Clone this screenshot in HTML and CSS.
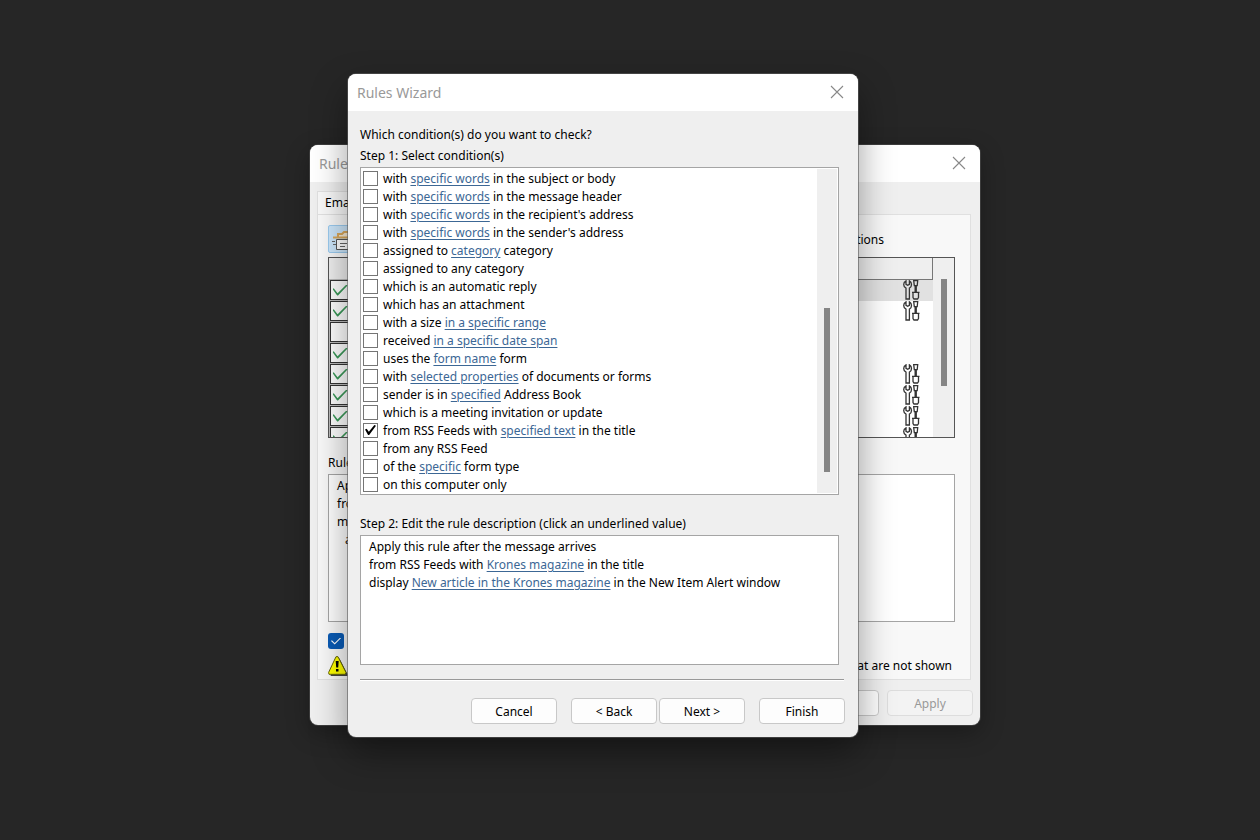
FILE: index.html
```html
<!DOCTYPE html>
<html lang="en">
<head>
<meta charset="utf-8">
<title>Rules Wizard</title>
<link rel="stylesheet" href="styles.css">
</head>
<body>
<svg class="defs" aria-hidden="true">
  <symbol id="close" viewBox="0 0 14 14"><path d="M1 1l12 12M13 1L1 13" fill="none" stroke="currentColor" stroke-width="1.100"/></symbol>
  <symbol id="tools" viewBox="0 0 17 20">
    <g fill="none" stroke="#333" stroke-width="1.300">
      <path d="M3 .8C1.300 1.500.7 3 .7 4.500c0 2 1 3 2.300 3.600V19h3.400V8.100C7.800 7.500 8.500 6 8.500 4.500 8.500 3 7.800 1.500 6.400.8v3.500L4.700 5.300 3 4.300z"/>
      <path d="M10.700.7h4l-.5 5h-2.900zM10 12.300h5.500v5.200l-1 1.500h-3.500l-1-1.500zM9 12.300h7.500"/>
      <path d="M12.700 6v6" stroke-width="2.400"/>
    </g>
  </symbol>
</svg>
<main class="desktop">

  <section class="window window-back" aria-label="Rules and Alerts">
    <header class="titlebar">
      <h2 class="title">Rules</h2>
      <button class="close" aria-label="Close"><svg><use href="#close"/></svg></button>
    </header>
    <div class="tabs"><button class="tab">Email</button></div>
    <div class="panel">
      <div class="toolbar">
        <button class="tool" aria-label="New rule">
          <svg viewBox="0 0 28 28">
            <path d="M4 11.500h20M9 11V8h4l2-2h9v5" fill="#f8ecd5" stroke="#d9a85b" stroke-width="2"/>
            <path d="M7.500 13.500h15v10h-15z" fill="#fff" stroke="#555"/>
            <path d="M3 15.500h3M4 18.500h3M11 17.500h7M11 20.500h5" stroke="#666"/>
          </svg>
        </button>
        <button class="tool-text">Options</button>
      </div>
      <div class="rules">
        <div class="rules-main">
          <div class="rules-head"></div>
          <ul class="rules-list">
            <li class="rule selected"><input type="checkbox" class="rule-check" aria-label="Rule 1" checked><svg><use href="#tools"/></svg></li>
            <li class="rule"><input type="checkbox" class="rule-check" aria-label="Rule 2" checked><svg><use href="#tools"/></svg></li>
            <li class="rule"><input type="checkbox" class="rule-check" aria-label="Rule 3"></li>
            <li class="rule"><input type="checkbox" class="rule-check" aria-label="Rule 4" checked></li>
            <li class="rule"><input type="checkbox" class="rule-check" aria-label="Rule 5" checked><svg><use href="#tools"/></svg></li>
            <li class="rule"><input type="checkbox" class="rule-check" aria-label="Rule 6" checked><svg><use href="#tools"/></svg></li>
            <li class="rule"><input type="checkbox" class="rule-check" aria-label="Rule 7" checked><svg><use href="#tools"/></svg></li>
            <li class="rule"><input type="checkbox" class="rule-check" aria-label="Rule 8" checked><svg><use href="#tools"/></svg></li>
          </ul>
        </div>
        <div class="scrollbar scrollbar-rules"><div class="thumb"></div></div>
      </div>
      <p class="rule-label">Rule</p>
      <div class="summary summary-back">
        <p>Ap</p>
        <p>fro</p>
        <p>m</p>
        <p class="indent">a</p>
      </div>
      <div class="enable"><input type="checkbox" class="blue-check" aria-label="Enable rules" checked></div>
      <div class="warning">
        <svg viewBox="0 0 20 20">
          <path d="M8.500 2.500h3L19.500 18v2H2.500z" fill="#444"/>
          <path d="M8 .7h2L18 16.500l-.7 1.800H1L.6 16.500z" fill="#ff0" stroke="#66660a"/>
          <path d="M7.700 5h3l-.5 6.500h-2zM8 13h2.500v2.500H8z" fill="#000"/>
        </svg>
        <span>that are not shown</span>
      </div>
    </div>
    <footer class="back-actions">
      <button class="btn" aria-label="Dismiss"></button>
      <button class="btn" disabled>Apply</button>
    </footer>
  </section>

  <section class="window window-front" aria-label="Rules Wizard">
    <header class="titlebar">
      <h1 class="title">Rules Wizard</h1>
      <button class="close" aria-label="Close"><svg><use href="#close"/></svg></button>
    </header>
    <div class="wizard">
      <p class="line">Which condition(s) do you want to check?</p>
      <p class="line">Step 1: Select condition(s)</p>
      <div class="conditions">
        <ul class="condition-list">
          <li><input type="checkbox" id="c1"><label for="c1">with <a href="#">specific words</a> in the subject or body</label></li>
          <li><input type="checkbox" id="c2"><label for="c2">with <a href="#">specific words</a> in the message header</label></li>
          <li><input type="checkbox" id="c3"><label for="c3">with <a href="#">specific words</a> in the recipient's address</label></li>
          <li><input type="checkbox" id="c4"><label for="c4">with <a href="#">specific words</a> in the sender's address</label></li>
          <li><input type="checkbox" id="c5"><label for="c5">assigned to <a href="#">category</a> category</label></li>
          <li><input type="checkbox" id="c6"><label for="c6">assigned to any category</label></li>
          <li><input type="checkbox" id="c7"><label for="c7">which is an automatic reply</label></li>
          <li><input type="checkbox" id="c8"><label for="c8">which has an attachment</label></li>
          <li><input type="checkbox" id="c9"><label for="c9">with a size <a href="#">in a specific range</a></label></li>
          <li><input type="checkbox" id="c10"><label for="c10">received <a href="#">in a specific date span</a></label></li>
          <li><input type="checkbox" id="c11"><label for="c11">uses the <a href="#">form name</a> form</label></li>
          <li><input type="checkbox" id="c12"><label for="c12">with <a href="#">selected properties</a> of documents or forms</label></li>
          <li><input type="checkbox" id="c13"><label for="c13">sender is in <a href="#">specified</a> Address Book</label></li>
          <li><input type="checkbox" id="c14"><label for="c14">which is a meeting invitation or update</label></li>
          <li><input type="checkbox" id="c15" checked><label for="c15">from RSS Feeds with <a href="#">specified text</a> in the title</label></li>
          <li><input type="checkbox" id="c16"><label for="c16">from any RSS Feed</label></li>
          <li><input type="checkbox" id="c17"><label for="c17">of the <a href="#">specific</a> form type</label></li>
          <li><input type="checkbox" id="c18"><label for="c18">on this computer only</label></li>
        </ul>
        <div class="scrollbar scrollbar-conditions"><div class="thumb"></div></div>
      </div>
      <p class="line step-two">Step 2: Edit the rule description (click an underlined value)</p>
      <div class="summary summary-front">
        <p>Apply this rule after the message arrives</p>
        <p>from RSS Feeds with <a href="#">Krones magazine</a> in the title</p>
        <p>display <a href="#">New article in the Krones magazine</a> in the New Item Alert window</p>
      </div>
      <hr class="rule-line">
      <footer class="wizard-actions">
        <button class="btn">Cancel</button>
        <div class="nav"><button class="btn">&lt; Back</button><button class="btn">Next &gt;</button></div>
        <button class="btn">Finish</button>
      </footer>
    </div>
  </section>
</main>
</body>
</html>
```
FILE: styles.css
```css
* { box-sizing: border-box; }
body {
  margin: 0;
  background: #262626;
  color: #000;
  font: 12px/18px "Noto Sans", "Open Sans", sans-serif;
}
p, h1, h2, ul { margin: 0; padding: 0; }
ul { list-style: none; }
a { color: #3c6795; text-underline-offset: 2px; text-decoration-thickness: 1px; }
button { font: inherit; color: inherit; padding: 0; }
input { appearance: none; margin: 0; flex: none; display: grid; place-items: center; }
.defs { display: none; }

.desktop { position: relative; min-height: 840px; overflow: hidden; }
.window {
  position: absolute;
  background: #efefef;
  border-radius: 8px;
  overflow: hidden;
}
.window-back {
  left: calc(50% - 320px);
  top: 145px;
  width: 670px;
  box-shadow: 0 0 0 1px #3c3c3c, 0 8px 24px rgba(0, 0, 0, .3);
}
.window-front {
  left: calc(50% - 282px);
  top: 74px;
  width: 510px;
  box-shadow: 0 0 0 1px rgba(90, 90, 90, .6), 0 16px 36px rgba(0, 0, 0, .4);
}
.titlebar {
  display: flex;
  align-items: center;
  justify-content: space-between;
  height: 37px;
  padding: 0 14px 0 9px;
  background: #fff;
  color: #999;
}
.title { font-size: 14px; font-weight: 400; }
.close { display: grid; margin-bottom: 2px; border: 0; background: none; color: #888; }
.close svg { width: 14px; height: 14px; }

.btn {
  width: 86px;
  height: 26px;
  padding-top: 2px;
  background: #fdfdfd;
  border: 1px solid #c8c8c8;
  border-radius: 4px;
}
.btn:disabled { background: #f3f3f3; border-color: #ddd; color: #999; }

.scrollbar { background: #efefef; }
.thumb { width: 6px; margin-left: 7px; background: #858585; }
.summary { background: #fff; border: 1px solid #a5a5a5; padding: 2px 8px; }

/* Wizard */
.wizard { padding: 14px 13px 13px 12px; }
.line { height: 21px; line-height: 20px; }
.conditions {
  display: flex;
  margin-right: 6px;
  padding: 1px;
  background: #fff;
  border: 1px solid #a5a5a5;
}
.condition-list { flex: 1; padding-left: 1px; }
.condition-list li { display: flex; align-items: center; gap: 5px; height: 18px; }
.condition-list label { padding-top: 1px; }
.condition-list input { width: 15px; height: 15px; border: 1px solid #757575; background: #fff; }
.condition-list input:checked::before {
  content: "";
  width: 11px;
  height: 10px;
  background: #000;
  clip-path: polygon(0 45%, 15% 38%, 35% 68%, 85% 0, 100% 8%, 38% 100%, 28% 100%);
}
.scrollbar-conditions { width: 20px; padding-top: 139px; }
.scrollbar-conditions .thumb { height: 164px; }
.step-two { margin-top: 19px; }
.summary-front { height: 130px; margin-right: 6px; }
.rule-line { margin: 14px 1px 0 0; border: 0; border-top: 1px solid #999; border-bottom: 1px solid #fff; }
.wizard-actions { display: flex; justify-content: flex-end; gap: 14px; margin-top: 17px; }
.nav { display: flex; gap: 2px; }

/* Rules and Alerts */
.tabs { padding: 9px 7px 0; }
.tab {
  display: block;
  width: 80px;
  height: 23px;
  padding-left: 7px;
  text-align: left;
  background: #f8f8f8;
  border: 1px solid #e0e0e0;
  border-bottom: 0;
}
.panel {
  margin: 0 9px 0 7px;
  padding: 10px 15px 3px 10px;
  background: #f8f8f8;
  border: 1px solid #e0e0e0;
}
.toolbar { display: flex; justify-content: space-between; padding-right: 71px; }
.tool { width: 29px; height: 28px; background: #cce6fa; border: 1px solid #9bcbef; border-radius: 2px; }
.tool svg { display: block; width: 28px; height: 28px; }
.tool-text { border: 0; background: none; height: 29px; }
.rules { display: flex; height: 181px; margin-top: 3px; border: 1px solid #555; background: #fff; overflow: hidden; }
.rules-main { flex: 1; }
.rules-head { height: 22px; background: #efefef; border: solid #777; border-width: 0 1px 1px 0; }
.rule { display: flex; align-items: flex-start; justify-content: space-between; height: 21px; padding: 0 13px 0 1px; }
.rule.selected { background: #e1e1e1; }
.rule svg { width: 17px; height: 20px; }
.rule-check { width: 20px; height: 20px; background: #fff; border: 1px solid #333; box-shadow: 0 0 0 1px #bbb; }
.rule-check:checked::before {
  content: "";
  width: 15px;
  height: 11px;
  background: #3b9a59;
  clip-path: polygon(0 42%, 8% 34%, 34% 80%, 93% 0, 100% 8%, 37% 100%, 31% 100%);
}
.scrollbar-rules { width: 21px; padding: 21px 0 0 1px; }
.scrollbar-rules .thumb { height: 107px; }
.rule-label { margin-top: 16px; }
.summary-back { height: 148px; margin-top: 2px; }
.indent { padding-left: 8px; }
.enable { margin-top: 11px; }
.blue-check { width: 16px; height: 16px; background: #0a5bb5; border-radius: 3px; }
.blue-check:checked::before {
  content: "";
  width: 10px;
  height: 7px;
  background: #fff;
  clip-path: polygon(0 50%, 9% 38%, 37% 80%, 92% 0, 100% 10%, 37% 100%);
}
.warning { display: flex; justify-content: space-between; align-items: center; margin-top: 7px; padding-right: 3px; }
.warning svg { width: 20px; height: 20px; }
.back-actions { display: flex; justify-content: flex-end; gap: 8px; padding: 10px 7px 9px; }
```
